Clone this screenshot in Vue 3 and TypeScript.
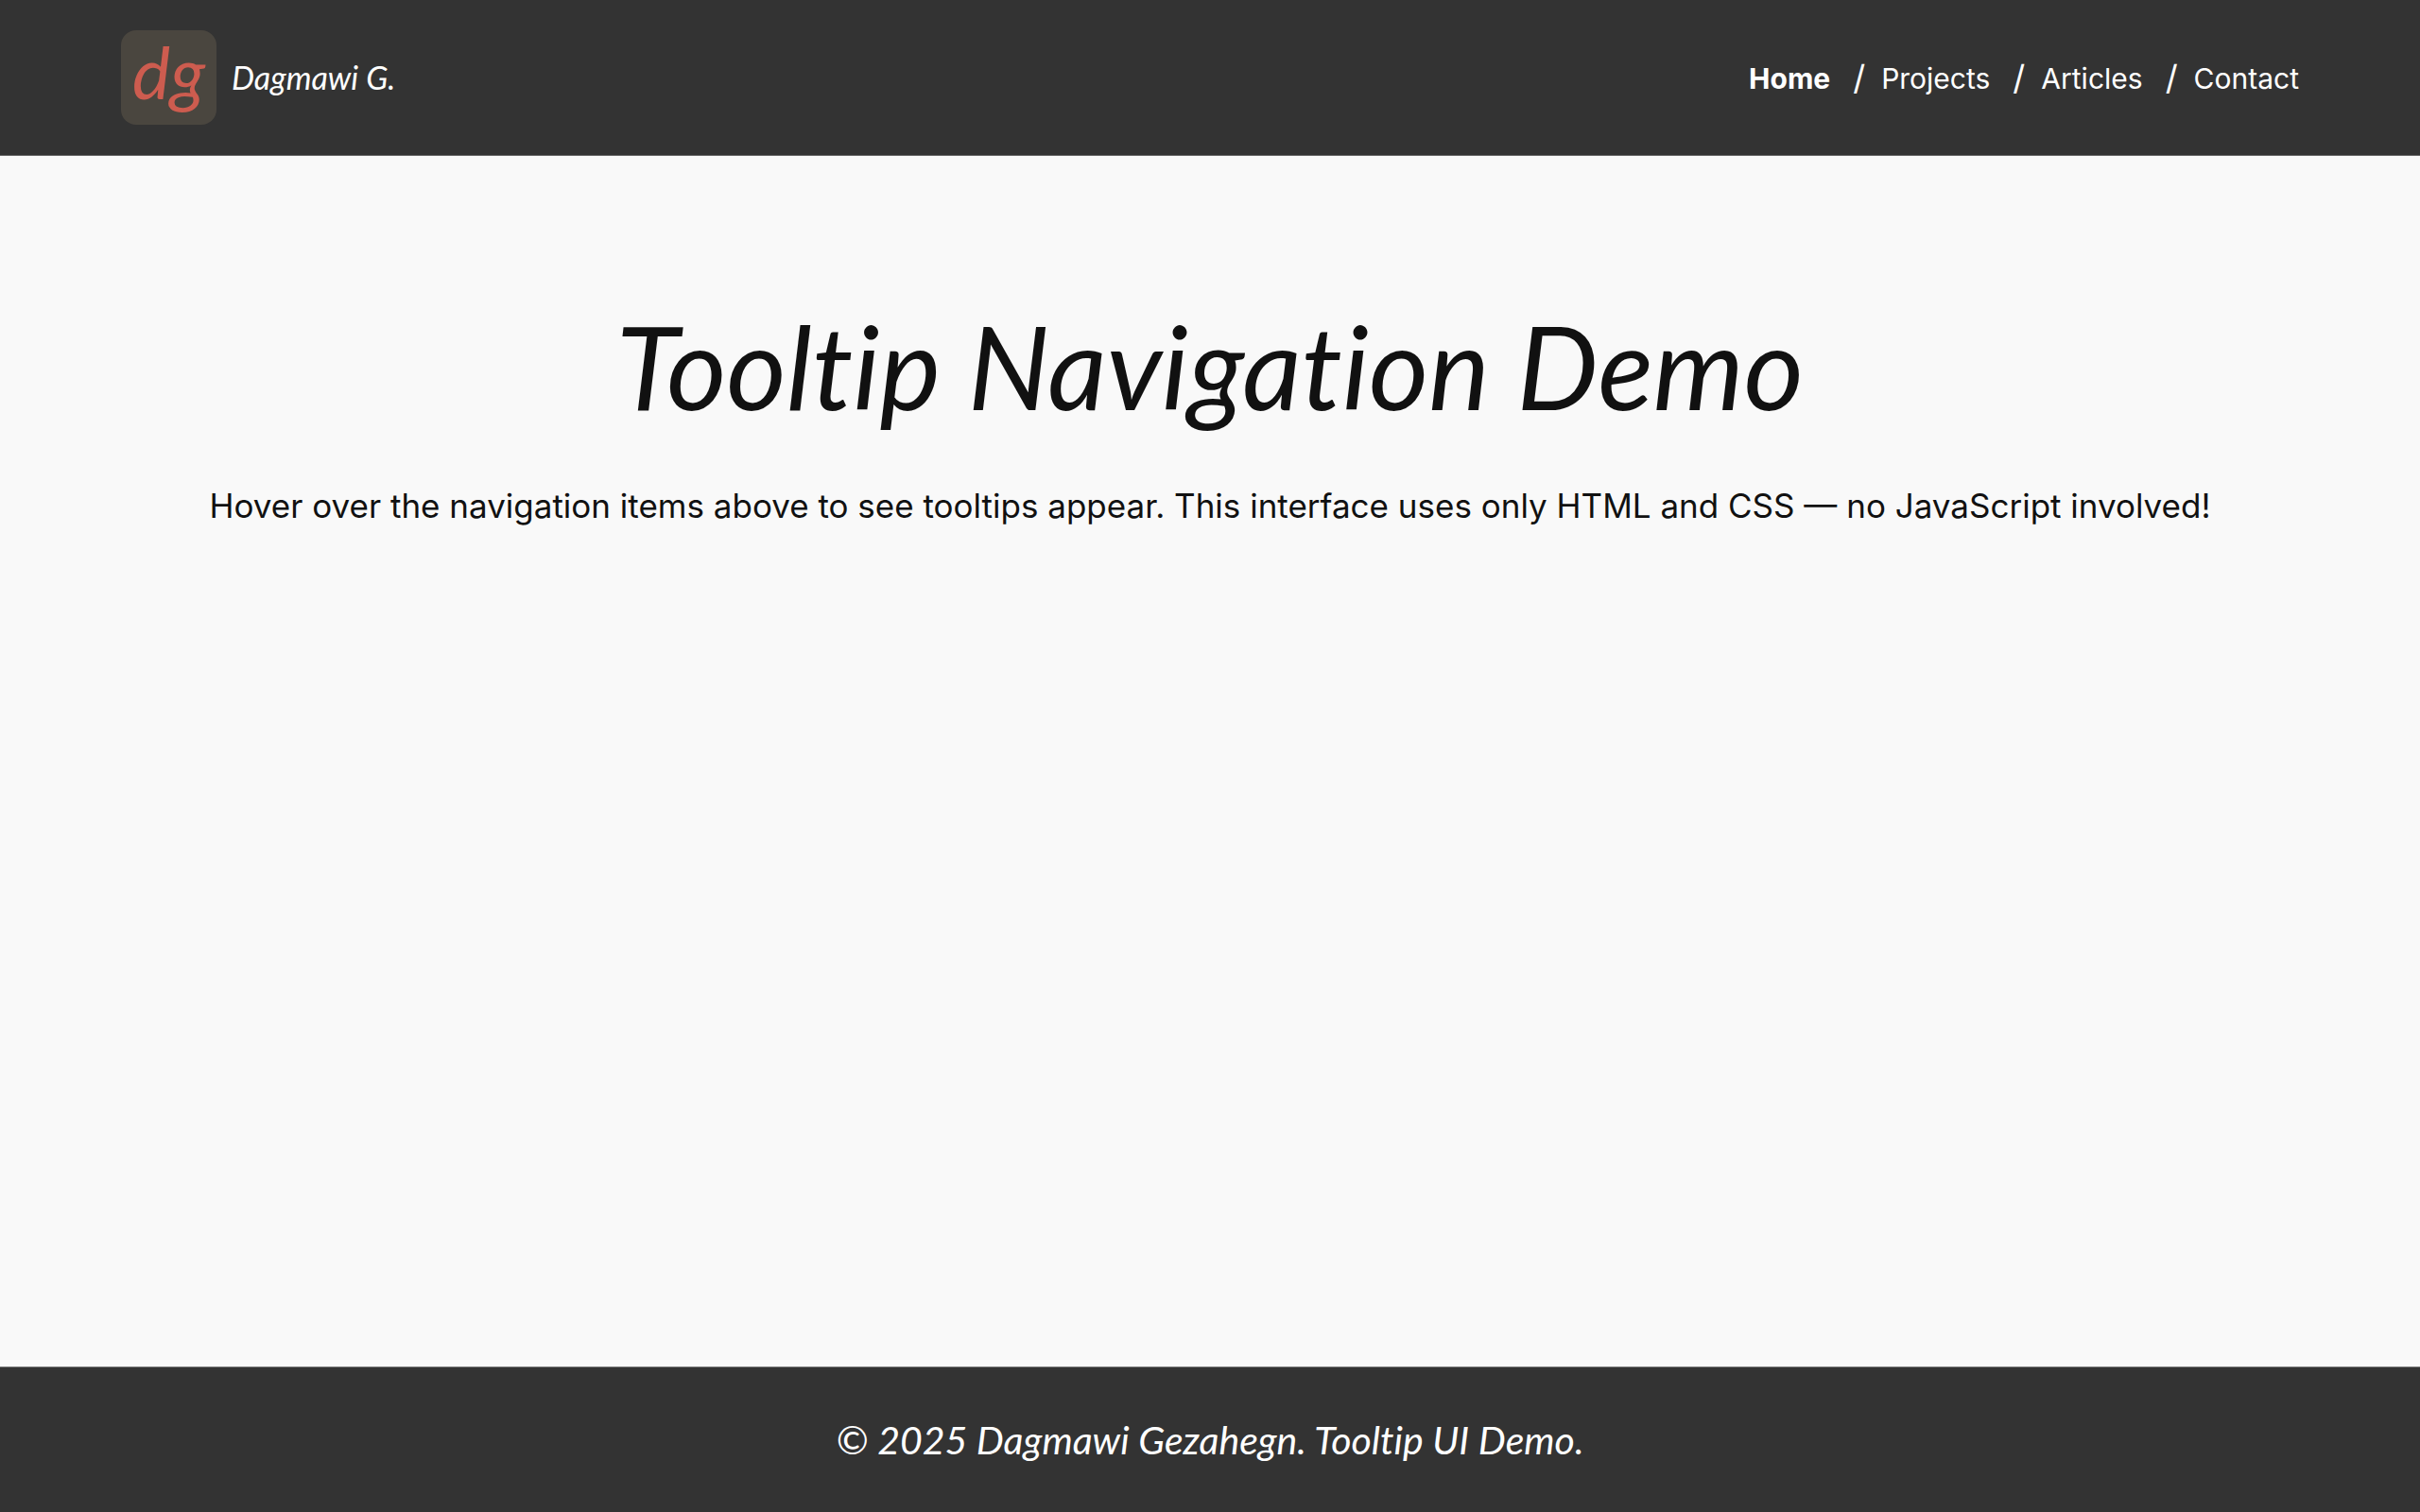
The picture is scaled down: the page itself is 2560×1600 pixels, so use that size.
<script setup lang="ts">
interface NavItem {
  label: string
  href: string
  tip: string
  current?: boolean
}

const items: NavItem[] = [
  { label: 'Home', href: '#home', tip: 'Go to the home page', current: true },
  { label: 'Projects', href: '#projects', tip: 'See my projects' },
  { label: 'Articles', href: '#articles', tip: 'Read my articles' },
  { label: 'Contact', href: '#contact', tip: 'Get in touch' },
]
</script>

<template>
  <div class="page">
    <header class="header">
      <a class="brand" href="#home">
        <span class="mark">dg</span>
        <span class="name">Dagmawi G.</span>
      </a>
      <nav>
        <ul class="menu">
          <li v-for="item in items" :key="item.label" class="item">
            <a
              class="link"
              :class="{ current: item.current }"
              :href="item.href"
              :title="item.tip"
              :aria-current="item.current ? 'page' : undefined"
            >{{ item.label }}</a>
          </li>
        </ul>
      </nav>
    </header>

    <main class="main">
      <h1 class="title">Tooltip Navigation Demo</h1>
      <p class="lead">
        Hover over the navigation items above to see tooltips appear. This interface uses only HTML and CSS — no
        JavaScript involved!
      </p>
    </main>

    <footer class="footer">
      <p class="copy">© 2025 Dagmawi Gezahegn. Tooltip UI Demo.</p>
    </footer>
  </div>
</template>

<style>
body {
  margin: 0;
  background: #f9f9f9;
}
</style>

<style scoped>
.page {
  display: flex;
  flex-direction: column;
  min-height: 100vh;
  background: #f9f9f9;
  color: #111;
  font-family: Inter, 'Liberation Sans', sans-serif;
}

.header {
  display: flex;
  align-items: center;
  justify-content: space-between;
  padding: 32px 5%;
  background: #333;
  border-bottom: 1px solid #666;
}

.brand {
  display: flex;
  align-items: center;
  gap: 16px;
  color: #fff;
  text-decoration: none;
  font-family: Lato, 'Liberation Sans', sans-serif;
  font-style: italic;
}

.mark {
  display: flex;
  justify-content: center;
  width: 101px;
  height: 100px;
  border-radius: 16px;
  background: #4a463f;
  color: #cd5c4f;
  font-size: 76px;
  line-height: 88px;
}

.name {
  font-size: 34px;
  line-height: 40px;
}

.menu {
  display: flex;
  margin: 0;
  padding: 0;
  list-style: none;
}

.item {
  display: flex;
  align-items: center;
  font-size: 30px;
  line-height: 40px;
}

.item + .item::before {
  content: '/';
  margin: 0 17px 0 24px;
  font-size: 36px;
  color: #fff;
}

.link {
  padding-top: 2px;
  color: #fff;
  text-decoration: none;
}

.current {
  font-weight: 700;
}

.main {
  flex: 1;
  padding: 152px 5% 96px;
  text-align: center;
}

.title {
  margin: 0 0 50px;
  font-family: Lato, 'Liberation Sans', sans-serif;
  font-size: 122px;
  font-style: italic;
  font-weight: 400;
  font-variant-ligatures: none;
  line-height: 140px;
}

.lead {
  margin: 0;
  font-size: 35px;
  line-height: 56px;
}

.footer {
  padding: 48px 5%;
  background: #333;
  border-top: 1px solid #808080;
  color: #fff;
  text-align: center;
}

.copy {
  margin: 0;
  font-family: Lato, 'Liberation Sans', sans-serif;
  font-size: 41px;
  font-style: italic;
  font-variant-ligatures: none;
  line-height: 57px;
}
</style>
